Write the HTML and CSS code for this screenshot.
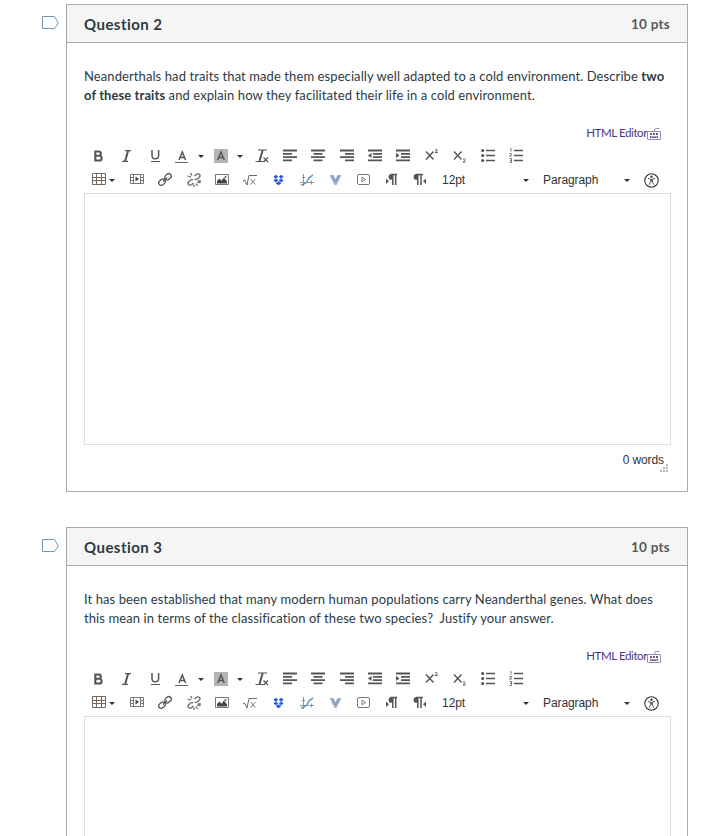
FILE: index.html
```
<!DOCTYPE html>
<html lang="en">
<head>
  <meta charset="UTF-8">
  <title>Quiz</title>
  <link rel="stylesheet" href="styles.css">
</head>
<body>

  <svg class="sprite">
    <symbol id="i-flag" viewBox="0 0 18 14"><path d="M1.500.5H13.500L17.300 7 13.500 12.500H1.500z" fill="#fff" stroke="#6f98b5"/></symbol>
    <symbol id="i-bold" viewBox="0 0 16 16"><path d="M5.300 3.500h3.400a2 2 0 0 1 0 4.300H5.300zM5.300 7.800h4a2.300 2.300 0 0 1 0 4.700h-4z" fill="none" stroke="#555" stroke-width="2.100"/></symbol>
    <symbol id="i-italic" viewBox="0 0 16 16"><path d="M7 2.600h6M4 13.400h6" stroke="#555" stroke-width="1.200"/><path d="M10.200 2.500L7 13.500" stroke="#555" stroke-width="2"/></symbol>
    <symbol id="i-under" viewBox="0 0 16 16"><path d="M5 2v5.500a3.300 3.300 0 0 0 6.600 0V2" fill="none" stroke="#555" stroke-width="1.500"/><path d="M4 13.500h9" stroke="#555"/></symbol>
    <symbol id="i-color" viewBox="0 0 16 16"><path d="M5 12L8.300 4l3.300 8M6 9.500h4.600" fill="none" stroke="#555" stroke-width="1.500"/><path d="M1 14.500h13" stroke="#666"/></symbol>
    <symbol id="i-back" viewBox="0 0 16 16"><path d="M1 1h14v14H1z" fill="#b5b5b5"/><path d="M4.700 12L8 4l3.300 8M5.700 9.500h4.600" fill="none" stroke="#555" stroke-width="1.500"/></symbol>
    <symbol id="i-clear" viewBox="0 0 16 16"><path d="M4 2h9M1.500 13.500h8" stroke="#555" stroke-width="1.200"/><path d="M8.700 2L5.500 13" stroke="#555" stroke-width="2"/><path d="M9.500 9.500l4.500 4.500M14 9.500L9.500 14" stroke="#555" stroke-width="1.200"/></symbol>
    <symbol id="i-left" viewBox="0 0 16 16"><path d="M1 2.500h14M1 5.800h9M1 9.100h14M1 12.400h9" stroke="#555" stroke-width="1.800"/></symbol>
    <symbol id="i-center" viewBox="0 0 16 16"><path d="M1 2.500h14M3.500 5.800h9M1 9.100h14M3.500 12.400h9" stroke="#555" stroke-width="1.800"/></symbol>
    <symbol id="i-right" viewBox="0 0 16 16"><path d="M1 2.500h14M6 5.800h9M1 9.100h14M6 12.400h9" stroke="#555" stroke-width="1.800"/></symbol>
    <symbol id="i-outdent" viewBox="0 0 16 16"><path d="M1 2.500h14M6 5.800h9M6 9.100h9M1 12.400h14" stroke="#555" stroke-width="1.800"/><path d="M4.500 4.700v5.400L1 7.400z" fill="#555"/></symbol>
    <symbol id="i-indent" viewBox="0 0 16 16"><path d="M1 2.500h14M6 5.800h9M6 9.100h9M1 12.400h14" stroke="#555" stroke-width="1.800"/><path d="M1 4.700v5.400l3.500-2.700z" fill="#555"/></symbol>
    <symbol id="i-sup" viewBox="0 0 16 16"><path d="M2 3.500l7.500 8M9.500 3.500l-7.500 8" stroke="#555" stroke-width="1.400"/><path d="M11 2q1.500-1.500 2.300 0 0 1-2.300 2.500h2.800" fill="none" stroke="#555" stroke-width=".9"/></symbol>
    <symbol id="i-sub" viewBox="0 0 16 16"><path d="M2 3.500l7.500 8M9.500 3.500l-7.500 8" stroke="#555" stroke-width="1.400"/><path d="M11 11.500q1.500-1.500 2.300 0 0 1-2.300 2.500h2.800" fill="none" stroke="#555" stroke-width=".9"/></symbol>
    <symbol id="i-ul" viewBox="0 0 16 16"><path d="M6 2.500h9M6 7.500h9M6 12.500h9" stroke="#555" stroke-width="1.400"/><circle cx="2.700" cy="2.500" r="1.600" fill="#555"/><circle cx="2.700" cy="7.500" r="1.600" fill="#555"/><circle cx="2.700" cy="12.500" r="1.600" fill="#555"/></symbol>
    <symbol id="i-ol" viewBox="0 0 16 16"><path d="M6 2.500h9M6 7.500h9M6 12.500h9" stroke="#555" stroke-width="1.400"/><path d="M2 1l1-.5v3M1.500 5.500h2v1l-2 1.500h2.300M1.500 10.500h2v4h-2M2 12.500h1.500" fill="none" stroke="#666" stroke-width=".9"/></symbol>
    <symbol id="i-table" viewBox="0 0 16 16"><path d="M1.500 1.500h13v11h-13zM1.500 5.500h13M1.500 8.500h13M5.500 1.500v11M10.500 1.500v11" fill="none" stroke="#75695f"/></symbol>
    <symbol id="i-media" viewBox="0 0 16 16"><path d="M1.500 2.500h13v9h-13zM4.500 2.500v9M11.500 2.500v9M1.500 5.500h3M1.500 8.500h3M11.500 5.500h3M11.500 8.500h3" fill="none" stroke="#777"/><path d="M6.500 4.500v5L10 7z" fill="#444"/></symbol>
    <symbol id="i-link" viewBox="0 0 16 16"><g fill="none" stroke="#555" stroke-width="1.300"><rect x="7.500" y="2.300" width="7" height="5" rx="2.500" transform="rotate(-42 11 4.800)"/><rect x="1.500" y="7.700" width="7" height="5" rx="2.500" transform="rotate(-42 5 10.200)"/><path d="M6 9.500l4-4"/></g></symbol>
    <symbol id="i-unlink" viewBox="0 0 16 16"><g fill="none" stroke="#666" stroke-width="1.300"><path d="M8.500 4l2-1.700q1.500-1 2.800 0 1.500 1.500 0 3L11.300 7q-1.300.8-2.500 0M7.500 11l-2 1.700q-1.500 1-2.800 0-1.500-1.500 0-3L4.700 8q1.300-.8 2.500 0"/><path d="M1.500 4L5 5M4.500 1L6 3.500M14.500 11L11 10M11.500 14L10 11.500M8 12.500V15M12 9h3"/></g></symbol>
    <symbol id="i-image" viewBox="0 0 16 16"><path d="M1.500 2.500h13v10h-13z" fill="none" stroke="#777"/><path d="M3 11.500V9l2.500-2.500 2 2.200L10 5.500l3 4v2z" fill="#444"/><circle cx="11.500" cy="4.900" r="1" fill="#555"/></symbol>
    <symbol id="i-sqrt" viewBox="0 0 16 16"><path d="M1 9l1.500-1L5 13 7 3.500h8" fill="none" stroke="#666"/><path d="M8.500 7l5 5.500M13.500 7l-5 5.500" stroke="#777"/></symbol>
    <symbol id="i-dropbox" viewBox="0 0 16 16"><path d="M5.900 3l2.100 1.700-2.100 1.700-2.200-1.700zM11.100 3l2.200 1.700-2.200 1.700L9 4.700zM5.900 6.700L8 8.400l-2.100 1.700-2.200-1.700zM11.100 6.700l2.200 1.700-2.200 1.700L9 8.400zM8.500 9.500l2.500 1.700-2.500 1.700L6 11.200z" fill="#2458dc" stroke="#2458dc" stroke-width=".5"/></symbol>
    <symbol id="i-graph" viewBox="0 0 16 16"><path d="M4.500 2v12M1 10.500h14M12.500 8.500v4M3 5.500h3" stroke="#8a969e"/><path d="M2 13q5-1 6.500-4.500T14 3" fill="none" stroke="#5c9cc9" stroke-width="1.400"/></symbol>
    <symbol id="i-vee" viewBox="0 0 16 16"><path d="M2.500 3h4l2 4 2-4h4l-5 10h-2z" fill="#9db5d0"/><path d="M5 4l3.500 6L12 4" fill="none" stroke="#7493b8"/></symbol>
    <symbol id="i-play" viewBox="0 0 16 16"><rect x="2.500" y="2.500" width="12" height="10" rx="1.500" fill="none" stroke="#777"/><path d="M7 5.200v4.600l3.500-2.300z" fill="none" stroke="#777"/></symbol>
    <symbol id="i-ltr" viewBox="0 0 16 16"><path d="M13 2H7.500a2.700 2.700 0 0 0 0 5.800H9V2z" fill="#555"/><path d="M7 2.500h6M8.800 2.500v10.500M11.700 2.500v10.500" stroke="#555" stroke-width="1.500"/><path d="M2 6.500V12l3-2.700z" fill="#555"/></symbol>
    <symbol id="i-rtl" viewBox="0 0 16 16"><path d="M9 2H4.500a2.700 2.700 0 0 0 0 5.800H6V2z" fill="#555"/><path d="M4 2.500h7M5.800 2.500v10.500M9 2.500v10.500" stroke="#555" stroke-width="1.500"/><path d="M14 6.500V12l-3-2.700z" fill="#555"/></symbol>
    <symbol id="i-a11y" viewBox="0 0 16 16"><circle cx="8.500" cy="8.500" r="6.700" fill="none" stroke="#2d3b45" stroke-width="1.100"/><circle cx="8.500" cy="4.700" r="1.200" fill="#444"/><path d="M5 6.500l2.700.7v2l-1.400 3.500M12 6.500l-2.700.7v2l1.400 3.500M8 7.700h1v1.500H8z" fill="none" stroke="#555"/></symbol>
    <symbol id="i-keys" viewBox="0 0 14 12"><path d="M.5 3.500h13v8H.5zM7.500 3.500V2q0-1.500 2-1.500h3" fill="none" stroke="#9490b5"/><path d="M3 5h2v2H3zM6 5h2v2H6zM9 5h2v2H9zM3 8h1.500v2H3zM5 8.500h4V10H5zM9.500 8H11v2H9.500z" fill="#66578c"/></symbol>
    <symbol id="i-grip" viewBox="0 0 8 8"><path d="M6 0h2v2H6zM3 3h2v2H3zM6 3h2v2H6zM0 6h2v2H0zM3 6h2v2H3zM6 6h2v2H6z" fill="#b8b8b8"/></symbol>
  </svg>

  <div id="questions"></div>

  <template id="question-template">
    <div class="question-row">
      <svg class="flag"><use href="#i-flag"/></svg>
      <div class="question">
        <div class="header">
          <span class="name"></span>
          <span class="points">10 pts</span>
        </div>
        <div class="text"></div>
        <div class="switch"><a>HTML Editor</a><svg class="keys"><use href="#i-keys"/></svg></div>
        <div class="toolbar first"></div>
        <div class="toolbar second"></div>
        <div class="editor"></div>
      </div>
    </div>
  </template>

  <script src="script.js"></script>
</body>
</html>
```

FILE: styles.css
```
body {
  margin: 0;
  background: #fff;
  color: #2d3b45;
  font-family: Lato, sans-serif;
  font-variant-ligatures: none;
}

.sprite {
  display: none;
}

#questions {
  display: flex;
  flex-direction: column;
  gap: 35px;
  box-sizing: border-box;
  height: 836px;
  padding: 4px 33px 0 41px;
}

.question-row {
  display: flex;
  height: 488px;
}

.question-row.open {
  flex: 1;
  height: auto;
}

.flag {
  width: 18px;
  height: 14px;
  margin: 12px 7px 0 0;
}

.question {
  display: flex;
  flex-direction: column;
  box-sizing: border-box;
  width: 622px;
  border: 1px solid #aaa;
}

.header {
  display: flex;
  justify-content: space-between;
  align-items: center;
  height: 37px;
  padding: 0 17px;
  border-bottom: 1px solid #aaa;
  background: #f5f5f5;
  font-weight: bold;
}

.name {
  font-size: 15px;
  letter-spacing: .45px;
}

.points {
  color: #595959;
  font-size: 13.5px;
  letter-spacing: .25px;
}

.text {
  height: 38px;
  padding: 24px 0 0 17px;
  font-size: 13px;
  line-height: 19px;
  letter-spacing: .09px;
  white-space: nowrap;
}

.switch {
  display: flex;
  justify-content: flex-end;
  height: 18px;
  margin-top: 19px;
  padding-right: 26px;
  color: #4a3585;
  font-size: 11.5px;
  line-height: 18px;
  letter-spacing: -.4px;
}

.keys {
  width: 14px;
  height: 12px;
  margin-top: 4px;
}

.toolbar {
  display: flex;
  align-items: center;
  height: 24px;
  margin-left: 17px;
  color: #333;
  font-family: "Liberation Sans", sans-serif;
  font-size: 12px;
}

.first {
  margin-top: 2px;
}

.btn {
  display: flex;
  align-items: center;
  justify-content: center;
  width: 28.3px;
}

.btn svg {
  width: 16px;
  height: 16px;
}

.split {
  justify-content: flex-start;
  gap: 8px;
  box-sizing: border-box;
  width: 39.4px;
  padding-left: 5px;
}

.split.table {
  gap: 2px;
  width: 38.8px;
  padding-left: 7px;
}

.caret {
  border: 3.5px solid transparent;
  border-top-color: #333;
  border-bottom: 0;
}

.list {
  display: flex;
  align-items: center;
  justify-content: space-between;
  box-sizing: border-box;
  width: 102px;
  padding: 0 7px 0 8px;
  letter-spacing: -.1px;
}

.list.size {
  width: 101px;
  padding-right: 6px;
}

.editor {
  box-sizing: border-box;
  width: 587px;
  height: 252px;
  margin: 1px 0 0 17px;
  border: 1px solid #ddd;
}

.open .question, .open .editor {
  border-bottom: 0;
}

.open .editor {
  flex: 1;
}

.status {
  display: flex;
  justify-content: flex-end;
  padding: 7px 19px 0 0;
  color: #333;
  font: 12px/16px "Liberation Sans", sans-serif;
  letter-spacing: -.1px;
}

.grip {
  width: 8px;
  height: 8px;
  margin: 12px 0 0 -4px;
}
```

FILE: script.js
```
var questions = [
  {
    name: "Question 2",
    text: "Neanderthals had traits that made them especially well adapted to a cold environment. Describe <b>two<br>of these traits</b> and explain how they facilitated their life in a cold environment.",
    words: 0
  },
  {
    name: "Question 3",
    text: "It has been established that many modern human populations carry Neanderthal genes. What does<br>this mean in terms of the classification of these two species?&nbsp; Justify your answer."
  }
];

var firstRow = ["bold", "italic", "under", "color", "back", "clear", "left", "center", "right", "outdent", "indent", "sup", "sub", "ul", "ol"];
var secondRow = ["table", "media", "link", "unlink", "image", "sqrt", "dropbox", "graph", "vee", "play", "ltr", "rtl"];
var splits = ["color", "back", "table"];

function button(icon) {
  var split = splits.indexOf(icon) != -1;
  return '<div class="btn' + (split ? ' split ' + icon : '') + '"><svg><use href="#i-' + icon + '"/></svg>' +
    (split ? '<i class="caret"></i>' : '') + '</div>';
}

questions.forEach(function (q) {
  var row = document.getElementById("question-template").content.cloneNode(true);
  row.querySelector(".name").textContent = q.name;
  row.querySelector(".text").innerHTML = q.text;
  row.querySelector(".first").innerHTML = firstRow.map(button).join("");
  row.querySelector(".second").innerHTML = secondRow.map(button).join("") +
    '<div class="list size">12pt<i class="caret"></i></div>' +
    '<div class="list">Paragraph<i class="caret"></i></div>' +
    button("a11y");
  // a question without a word count fills the rest of the page
  if (q.words === undefined) {
    row.querySelector(".question-row").classList.add("open");
  } else {
    row.querySelector(".question").insertAdjacentHTML("beforeend",
      '<div class="status"><span>' + q.words + ' words</span><svg class="grip"><use href="#i-grip"/></svg></div>');
  }
  document.getElementById("questions").appendChild(row);
});
```
